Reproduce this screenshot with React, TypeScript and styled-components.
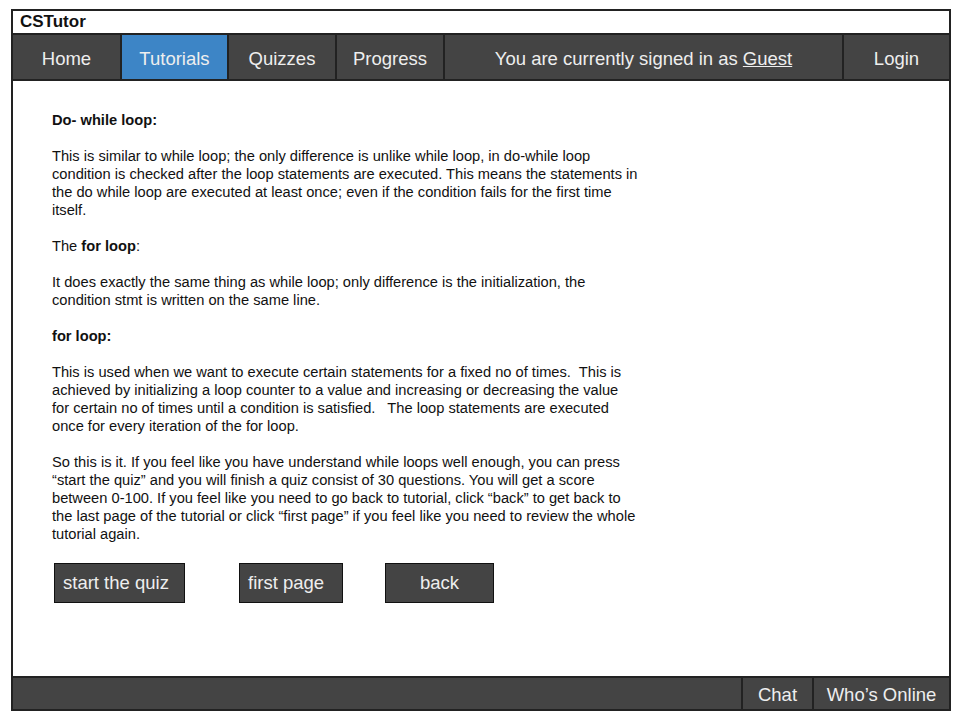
import React from "react";
import styled, { createGlobalStyle } from "styled-components";

const GlobalStyle = createGlobalStyle`
  html, body { margin: 0; padding: 0; background: #ffffff; }
  body { font-family: "Liberation Sans", Arial, sans-serif; }
  * { box-sizing: border-box; }
`;

const Page = styled.div`
  padding: 9px 0 0 11px;
`;

const Frame = styled.div`
  width: 940px;
  height: 702px;
  border: 2px solid #222222;
  display: flex;
  flex-direction: column;
  background: #ffffff;
`;

const TitleBar = styled.div`
  height: 22px;
  display: flex;
  align-items: center;
  padding-left: 7px;
  font-size: 17px;
  font-weight: bold;
  color: #111111;
`;

const NavBar = styled.nav`
  height: 48px;
  display: flex;
  background: #444444;
  border-top: 2px solid #222222;
  border-bottom: 2px solid #222222;
`;

const NavItem = styled.div<{ $w?: number; $active?: boolean; $grow?: boolean }>`
  ${(p) => (p.$grow ? "flex: 1;" : `width: ${p.$w}px;`)}
  display: flex;
  align-items: center;
  justify-content: center;
  padding-top: 3px;
  font-size: 18.5px;
  color: #eeeeee;
  background: ${(p) => (p.$active ? "#3d85c6" : "#444444")};
  & + & { border-left: 2px solid #222222; }
`;

const Underlined = styled.span`
  text-decoration: underline;
  margin-left: 5px;
`;

const Content = styled.main`
  flex: 1;
  padding: 30px 0 0 39px;
`;

const Article = styled.div`
  width: 588px;
  font-size: 14.67px;
  line-height: 18px;
  color: #111111;
`;

const Para = styled.p`
  margin: 0 0 18px 0;
`;

const Heading = styled.p`
  margin: 0 0 18px 0;
  font-weight: bold;
`;

const ButtonRow = styled.div`
  display: flex;
  margin-top: 20px;
  padding-left: 2px;
`;

const ActionButton = styled.button<{ $w: number; $gap: number; $center?: boolean }>`
  width: ${(p) => p.$w}px;
  height: 40px;
  margin-right: ${(p) => p.$gap}px;
  background: #444444;
  border: 1px solid #111111;
  color: #eeeeee;
  font-family: "Liberation Sans", Arial, sans-serif;
  font-size: 18.5px;
  display: flex;
  align-items: center;
  justify-content: ${(p) => (p.$center ? "center" : "flex-start")};
  padding: ${(p) => (p.$center ? "0" : "0 0 0 8px")};
  cursor: pointer;
`;

const Footer = styled.footer`
  height: 33px;
  display: flex;
  justify-content: flex-end;
  background: #444444;
  border-top: 2px solid #222222;
`;

const FooterItem = styled.div<{ $w: number }>`
  width: ${(p) => p.$w}px;
  display: flex;
  align-items: center;
  justify-content: center;
  padding-top: 2px;
  border-left: 2px solid #222222;
  color: #eeeeee;
  font-size: 18.5px;
`;

export default function App() {
  return (
    <Page>
      <GlobalStyle />
      <Frame>
        <TitleBar>CSTutor</TitleBar>
        <NavBar>
          <NavItem $w={107}>Home</NavItem>
          <NavItem $w={107} $active>
            Tutorials
          </NavItem>
          <NavItem $w={108}>Quizzes</NavItem>
          <NavItem $w={108}>Progress</NavItem>
          <NavItem $grow>
            You are currently signed in as<Underlined>Guest</Underlined>
          </NavItem>
          <NavItem $w={107}>Login</NavItem>
        </NavBar>
        <Content>
          <Article>
            <Heading>Do- while loop:</Heading>
            <Para>
              This is similar to while loop; the only difference is unlike while loop, in do-while loop
              condition is checked after the loop statements are executed. This means the statements in
              the do while loop are executed at least once; even if the condition fails for the first time
              itself.
            </Para>
            <Para>
              The <b>for loop</b>:
            </Para>
            <Para>
              It does exactly the same thing as while loop; only difference is the initialization, the
              condition stmt is written on the same line.
            </Para>
            <Heading>for loop:</Heading>
            <Para>
              This is used when we want to execute certain statements for a fixed no of times.&nbsp; This is
              achieved by initializing a loop counter to a value and increasing or decreasing the value
              <br />
              for certain no of times until a condition is satisfied.&nbsp;&nbsp; The loop statements are executed
              <br />
              once for every iteration of the for loop.
            </Para>
            <Para>
              So this is it. If you feel like you have understand while loops well enough, you can press
              “start the quiz” and you will finish a quiz consist of 30 questions. You will get a score
              between 0-100. If you feel like you need to go back to tutorial, click “back” to get back to
              the last page of the tutorial or click “first page” if you feel like you need to review the whole
              tutorial again.
            </Para>
          </Article>
          <ButtonRow>
            <ActionButton $w={131} $gap={54}>start the quiz</ActionButton>
            <ActionButton $w={104} $gap={42}>first page</ActionButton>
            <ActionButton $w={109} $gap={0} $center>
              back
            </ActionButton>
          </ButtonRow>
        </Content>
        <Footer>
          <FooterItem $w={71}>Chat</FooterItem>
          <FooterItem $w={137}>Who’s Online</FooterItem>
        </Footer>
      </Frame>
    </Page>
  );
}
